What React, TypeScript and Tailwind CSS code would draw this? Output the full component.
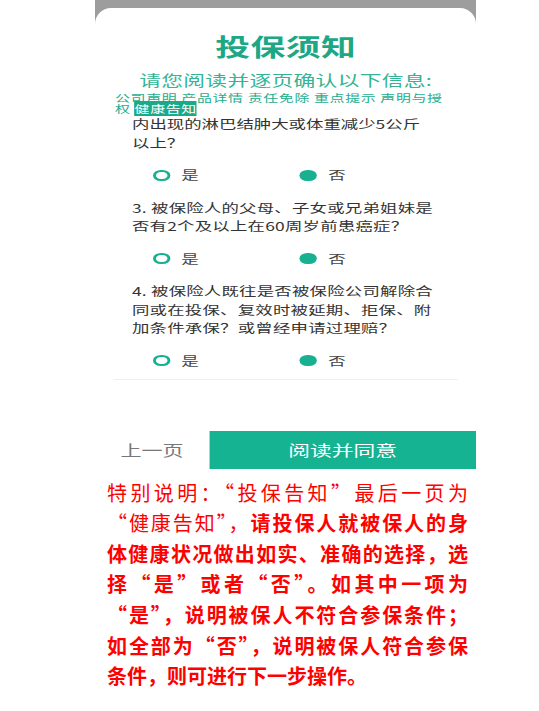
import React from "react";

const questions = [
  { lines: ["3. 被保险人的父母、子女或兄弟姐妹是", "否有2个及以上在60周岁前患癌症？"] },
  { lines: ["4. 被保险人既往是否被保险公司解除合", "同或在投保、复效时被延期、拒保、附", "加条件承保？或曾经申请过理赔？"] },
];

function Radio({ checked }: { checked?: boolean }) {
  if (checked) {
    return <span className="block h-[11px] w-[11.5px] rounded-full bg-[#17b191]" />;
  }
  return <span className="block h-[11px] w-[11.5px] rounded-full border-2 border-[#17b191]" />;
}

function Options() {
  return (
    <div className="flex h-[22px] items-center pl-[40px] text-[12px] text-[#444]">
      <div className="flex w-[101.4px] items-center gap-[8px]">
        <Radio />
        <span>是</span>
      </div>
      <div className="flex items-center gap-[8px]">
        <Radio checked />
        <span>否</span>
      </div>
    </div>
  );
}

export default function App(): React.JSX.Element {
  return (
    <div className="h-[711px] w-[539px] overflow-hidden bg-white font-['Noto_Sans_CJK_SC','Noto_Sans',sans-serif]">
      {/* phone screenshot */}
      <div className="ml-[95px] w-[381px] bg-[#9d9d9d] pt-[8px]">
        <div className="h-[461px] overflow-hidden rounded-t-[16px] bg-white">
          <div className="flex h-full w-[263px] origin-left scale-x-[1.45] flex-col">
            <h1 className="mt-[23px] text-center text-[24px] font-bold leading-[30px] tracking-[0.3px] text-[#1ca785]">
              投保须知
            </h1>
            <p className="mt-[9px] text-center text-[15px] leading-[20px] tracking-[0.2px] text-[#33b495]">
              请您阅读并逐页确认以下信息:
            </p>
            <div className="mt-[2px] h-[22px] pl-[13.8px] text-[10.3px] leading-[11px] tracking-[0.45px] text-[#25ad8d]">
              <div className="whitespace-nowrap">公司声明 产品详情 责任免除 重点提示 声明与授</div>
              <div className="h-[11px] whitespace-nowrap">
                权 <span className="bg-[#1aa98a] text-white">健康告知</span>
              </div>
            </div>

            <div className="pl-[25.5px] text-[12px] leading-[19px] text-[#333]">
              <div className="whitespace-nowrap">内出现的淋巴结肿大或体重减少5公斤</div>
              <div>以上？</div>
            </div>
            <div className="mt-[12px]">
              <Options />
            </div>

            {questions.map((q, i) => (
              <div key={i}>
                <div className="mt-[12.5px] pl-[25.5px] text-[12px] leading-[18.5px] tracking-[0.15px] text-[#333]">
                  {q.lines.map((l) => (
                    <div key={l} className="whitespace-nowrap">
                      {l}
                    </div>
                  ))}
                </div>
                <div className="mt-[12px]">
                  <Options />
                </div>
              </div>
            ))}

            <div className="mx-[13px] mt-[7px] h-px bg-[#eeeeee]" />

            <div className="mt-auto flex h-[38px] items-center">
              <div className="w-[78.6px] text-center text-[14.5px] text-[#777]">上一页</div>
              <div className="flex h-full flex-1 items-center justify-center bg-[#15b392] text-[15px] text-white">
                阅读并同意
              </div>
            </div>
          </div>
        </div>
      </div>

      {/* note */}
      <div className="ml-[107px] mt-[8.6px] w-[361px] text-[20px] leading-[30.6px] text-[#ff0000]">
        <div className="text-justify [text-align-last:justify]">特别说明：“投保告知”最后一页为</div>
        <div className="text-justify [text-align-last:justify]">
          “健康告知”，<span className="font-bold">请投保人就被保人的身</span>
        </div>
        <div className="font-bold">
          <div className="text-justify [text-align-last:justify]">体健康状况做出如实、准确的选择，选</div>
          <div className="text-justify [text-align-last:justify]">择“是”或者“否”。如其中一项为</div>
          <div className="text-justify [text-align-last:justify]">“是”，说明被保人不符合参保条件；</div>
          <div className="text-justify [text-align-last:justify]">如全部为“否”，说明被保人符合参保</div>
          <div>条件，则可进行下一步操作。</div>
        </div>
      </div>
    </div>
  );
}
